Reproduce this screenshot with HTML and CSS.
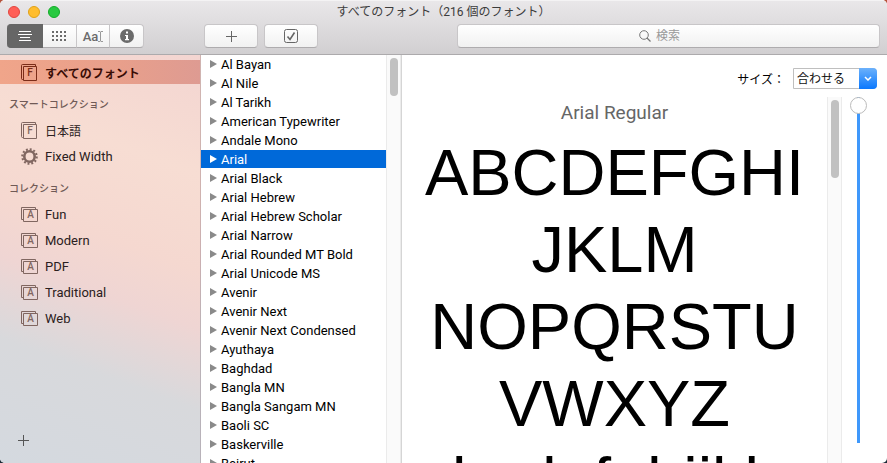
FILE: index.html
```
<!DOCTYPE html>
<html lang="ja">
<head>
  <meta charset="UTF-8" />
  <meta name="viewport" content="width=device-width, initial-scale=1.0"/>
  <title>すべてのフォント</title>
  <link rel="stylesheet" href="styles.css">
</head>
<body>
  <!-- shared icons -->
  <svg class="defs" aria-hidden="true">
    <symbol id="book" viewBox="0 0 17 17">
      <path d="M2.500 15.500H1.500A1 1 0 0 1 .500 14.500V1.500A1 1 0 0 1 1.500 .500H14.500V2M2.500 2.500H15.500V16.500H2.500Z" fill="none" stroke="currentColor"/>
    </symbol>
    <symbol id="stack" viewBox="0 0 17 15">
      <path d="M2.500 12.500H.500V.500H14.500V2.500M2.500 2.500H16.500V14.500H2.500Z" fill="none" stroke="currentColor"/>
    </symbol>
  </svg>

  <div class="window">
    <header class="toolbar">
      <div class="titlebar">
        <div class="lights">
          <button class="light close" aria-label="閉じる"></button>
          <button class="light minimize" aria-label="しまう"></button>
          <button class="light zoom" aria-label="拡大"></button>
        </div>
        <h1>すべてのフォント（216 個のフォント）</h1>
      </div>

      <div class="tools">
        <div class="segments">
          <button class="active" aria-label="サンプル">
            <svg width="14" height="11" viewBox="0 0 14 11"><path d="M1 .5H13M0 3.500H14M2 6.500H12M1 9.500H13" stroke="#fff"/></svg>
          </button>
          <button aria-label="レパートリー">
            <svg width="14" height="11" viewBox="0 0 14 11"><path d="M0 1H14M0 5H14M0 9H14" stroke="#6b6b6b" stroke-width="2" stroke-dasharray="2"/></svg>
          </button>
          <button class="custom" aria-label="カスタム">Aa<svg width="5" height="11" viewBox="0 0 5 11"><path d="M0 .5H2L2.500 1L3 .5H5M2.500 1V10M0 10.500H2L2.500 10L3 10.500H5" fill="none" stroke="#999"/></svg></button>
          <button aria-label="情報">
            <svg width="14" height="14" viewBox="0 0 14 14"><circle cx="7" cy="7" r="7" fill="#6b6b6b"/><path d="M6 2.500H8V4.500H6ZM5 6H8V10H9V11.200H5V10H6V7H5Z" fill="#fff"/></svg>
          </button>
        </div>
        <button class="tool add" aria-label="追加">
          <svg width="11" height="11" viewBox="0 0 11 11"><path d="M5.500 0V11M0 5.500H11" stroke="#666"/></svg>
        </button>
        <button class="tool" aria-label="有効">
          <svg width="14" height="14" viewBox="0 0 14 14" fill="none" stroke="#666"><rect x=".5" y=".5" width="13" height="13" rx="2"/><path d="M3.500 7.500L6 10.500L10.500 3.500" stroke-width="1.600"/></svg>
        </button>
        <label class="search">
          <svg width="12" height="12" viewBox="0 0 12 12" fill="none" stroke="#777"><circle cx="5" cy="5" r="4.300"/><path d="M8 8L11.500 11.500" stroke-width="1.300"/></svg>
          <input type="text" placeholder="検索" aria-label="検索">
        </label>
      </div>
    </header>

    <main class="panes">
      <nav class="sidebar">
        <ul class="library">
          <li><a class="selected" href="#all"><span class="icon"><svg width="17" height="17"><use href="#book"/></svg><b>F</b></span>すべてのフォント</a></li>
        </ul>
        <h2>スマートコレクション</h2>
        <ul>
          <li><a class="kanji" href="#japanese"><span class="icon"><svg width="17" height="17"><use href="#book"/></svg><b>F</b></span>日本語</a></li>
          <li><a href="#fixed"><span class="icon"><svg width="17" height="17" viewBox="0 0 17 17" fill="none" stroke="currentColor"><circle cx="8.500" cy="8.500" r="5.200" stroke-width="2.600"/><circle cx="8.500" cy="8.500" r="7.200" stroke-width="2.200" stroke-dasharray="1.900 1.870"/></svg></span>Fixed Width</a></li>
        </ul>
        <h2>コレクション</h2>
        <ul>
          <li><a href="#fun"><span class="icon flat"><svg width="17" height="15"><use href="#stack"/></svg><b>A</b></span>Fun</a></li>
          <li><a href="#modern"><span class="icon flat"><svg width="17" height="15"><use href="#stack"/></svg><b>A</b></span>Modern</a></li>
          <li><a href="#pdf"><span class="icon flat"><svg width="17" height="15"><use href="#stack"/></svg><b>A</b></span>PDF</a></li>
          <li><a href="#traditional"><span class="icon flat"><svg width="17" height="15"><use href="#stack"/></svg><b>A</b></span>Traditional</a></li>
          <li><a href="#web"><span class="icon flat"><svg width="17" height="15"><use href="#stack"/></svg><b>A</b></span>Web</a></li>
        </ul>
        <button class="new-collection" aria-label="コレクションを追加">
          <svg width="11" height="11" viewBox="0 0 11 11"><path d="M5.500 0V11M0 5.500H11" stroke="#555"/></svg>
        </button>
      </nav>

      <section class="fonts">
        <ul class="font-list">
          <li>Al Bayan</li>
          <li>Al Nile</li>
          <li>Al Tarikh</li>
          <li>American Typewriter</li>
          <li>Andale Mono</li>
          <li class="selected">Arial</li>
          <li>Arial Black</li>
          <li>Arial Hebrew</li>
          <li>Arial Hebrew Scholar</li>
          <li>Arial Narrow</li>
          <li>Arial Rounded MT Bold</li>
          <li>Arial Unicode MS</li>
          <li>Avenir</li>
          <li>Avenir Next</li>
          <li>Avenir Next Condensed</li>
          <li>Ayuthaya</li>
          <li>Baghdad</li>
          <li>Bangla MN</li>
          <li>Bangla Sangam MN</li>
          <li>Baoli SC</li>
          <li>Baskerville</li>
          <li>Beirut</li>
        </ul>
        <div class="scrollbar"><div class="thumb short"></div></div>
      </section>

      <section class="preview">
        <div class="size-row">
          <label for="size">サイズ：</label>
          <div class="combo">
            <select id="size">
              <option>合わせる</option>
            </select>
            <span class="arrow"><svg width="8" height="5" viewBox="0 0 8 5"><path d="M1 1L4 4L7 1" fill="none" stroke="#fff" stroke-width="1.500"/></svg></span>
          </div>
        </div>
        <div class="preview-body">
          <div class="sample">
            <h3>Arial Regular</h3>
            <p>ABCDEFGHI<br>JKLM<br>NOPQRSTU<br>VWXYZ<br>abcdefghijklm</p>
          </div>
          <div class="scrollbar"><div class="thumb"></div></div>
          <div class="slider">
            <input type="range" min="0" max="100" value="100" aria-label="サイズ">
          </div>
        </div>
      </section>
    </main>
  </div>
</body>
</html>
```
FILE: styles.css
```
* {
  box-sizing: border-box;
}

body {
  margin: 0;
  font-family: Roboto, 'Noto Sans CJK JP', sans-serif;
  font-size: 13px;
  color: #000;
  background: linear-gradient(#b5533c, #1c2c38);
}

ul, h1, h2, h3, p {
  margin: 0;
  padding: 0;
  list-style: none;
  font-weight: normal;
}

button, input, select {
  font-family: inherit;
  margin: 0;
}

.defs {
  position: absolute;
  width: 0;
  height: 0;
}

.window {
  display: flex;
  flex-direction: column;
  height: 100vh;
  border-radius: 5px;
  overflow: hidden;
  background: #fff;
}

/* toolbar */
.toolbar {
  flex: none;
  height: 55px;
  background: linear-gradient(#e9e7e9, #d1cfd1);
  border-top: 1px solid #f4f3f4;
  border-bottom: 1px solid #acaaac;
}

.titlebar {
  display: grid;
  grid-template-columns: 1fr auto 1fr;
  align-items: center;
  height: 21px;
  padding: 0 8px;
}

.titlebar h1 {
  font-size: 12px;
  line-height: 20px;
  color: #3c3c3c;
}

.lights {
  display: flex;
  gap: 8px;
}

.light {
  width: 12px;
  height: 12px;
  padding: 0;
  border: 1px solid;
  border-radius: 50%;
}

.close {
  background: #ff5f57;
  border-color: #e2463f;
}

.minimize {
  background: #ffbd2e;
  border-color: #e1a116;
}

.zoom {
  background: #28c940;
  border-color: #12ac28;
}

.tools {
  display: flex;
  padding: 2px 7px 0;
}

.segments {
  display: flex;
  width: 137px;
  height: 24px;
}

.segments button,
.tool,
.search {
  display: flex;
  align-items: center;
  justify-content: center;
  height: 24px;
  padding: 0;
  background: linear-gradient(#fff, #f1f1f1);
  border: 1px solid #c8c6c8;
  border-bottom-color: #aeacae;
  border-radius: 4px;
}

.segments button {
  flex: 1;
  border-radius: 0;
  border-left-width: 0;
}

.segments .active {
  flex: none;
  width: 36px;
  background: #666;
  border-color: #666;
  border-radius: 4px 0 0 4px;
}

.segments button:last-child {
  border-radius: 0 4px 4px 0;
}

.segments .custom {
  color: #6b6b6b;
  font-size: 13px;
  font-weight: 500;
}

.tool {
  width: 54px;
  margin-right: 6px;
}

.add {
  margin-left: 60px;
}

.search {
  flex: 1;
  gap: 5px;
  margin-left: 133px;
}

.search input {
  width: 42px;
  padding: 0;
  border: none;
  outline: none;
  background: none;
  font-size: 12px;
}

.search input::placeholder {
  color: #999;
}

/* panes */
.panes {
  flex: 1;
  display: flex;
  min-height: 0;
}

.sidebar {
  flex: none;
  display: flex;
  flex-direction: column;
  width: 201px;
  padding-top: 5px;
  border-right: 1px solid rgba(120, 90, 100, 0.3);
  background: linear-gradient(200deg, #f3d5d1 0%, #f7ddd3 25%, #f5d8d0 45%, #efd5d3 57%, #d8d9dc 74%, #d4d9df 100%);
}

.sidebar a {
  display: flex;
  align-items: center;
  gap: 7px;
  height: 26px;
  padding-left: 21px;
  color: #2a2020;
  font-size: 13px;
  text-decoration: none;
}

.sidebar .kanji {
  font-size: 12px;
}

.sidebar a.selected {
  height: 24px;
  margin-bottom: 1px;
  color: #3a0d06;
  font-size: 12px;
  font-weight: bold;
  background: linear-gradient(90deg, #f0a58a, #e89f8b 60%, #de9b92);
}

.sidebar h2 {
  margin-top: 7px;
  padding-left: 9px;
  font-size: 10px;
  line-height: 25px;
  color: #705a56;
  font-weight: 500;
}

.icon {
  display: grid;
  width: 17px;
  height: 17px;
  color: #806660;
}

.selected .icon {
  color: #7a2c18;
}

.icon svg,
.icon b {
  grid-area: 1 / 1;
}

.icon b {
  align-self: center;
  padding: 2px 0 0 1px;
  font-size: 10px;
  font-weight: 500;
  line-height: 10px;
  text-align: center;
}

.flat {
  height: 15px;
}

.flat b {
  padding-left: 2px;
}

.new-collection {
  display: flex;
  margin: auto 0 17px 18px;
  padding: 0;
  border: none;
  background: none;
  align-self: flex-start;
}

/* font list */
.fonts {
  flex: none;
  display: flex;
  width: 201px;
  border-right: 1px solid #d5d5d5;
}

.font-list {
  flex: 1;
  overflow: hidden;
}

.font-list li {
  display: flex;
  align-items: center;
  gap: 4px;
  height: 18px;
  margin-bottom: 1px;
  padding-left: 9px;
  white-space: nowrap;
}

.font-list li::before {
  content: '';
  border: 4px solid transparent;
  border-left: 7px solid #8a8a8a;
  border-right: none;
}

.font-list .selected {
  color: #fff;
  background: #0069d9;
}

.font-list .selected::before {
  border-left-color: #fff;
}

.scrollbar {
  flex: none;
  width: 15px;
  padding: 3px;
  background: #fafafa;
  border-left: 1px solid #ebebeb;
  border-right: 1px solid #ebebeb;
}

.thumb {
  width: 8px;
  height: 78px;
  border-radius: 4px;
  background: #c1c1c1;
}

.thumb.short {
  height: 38px;
}

/* preview */
.preview {
  flex: 1;
  display: flex;
  flex-direction: column;
  min-width: 0;
}

.size-row {
  display: flex;
  flex: none;
  justify-content: flex-end;
  align-items: center;
  gap: 8px;
  height: 42px;
  padding: 5px 10px 0 0;
  font-size: 12px;
}

.combo {
  display: flex;
  position: relative;
}

.combo select {
  width: 84px;
  height: 21px;
  padding: 0 20px 0 3px;
  appearance: none;
  border: 1px solid #bfbfbf;
  border-radius: 0 4px 4px 0;
  background: #fff;
  color: #111;
  font-size: 12px;
}

.arrow {
  position: absolute;
  top: 0;
  right: 0;
  bottom: 0;
  display: flex;
  align-items: center;
  justify-content: center;
  width: 18px;
  border-radius: 0 4px 4px 0;
  background: linear-gradient(#6cb1fb, #0a78fe);
  pointer-events: none;
}

.preview-body {
  flex: 1;
  display: flex;
  min-height: 0;
}

.sample {
  flex: 1;
  min-width: 0;
  overflow: hidden;
  text-align: center;
}

.sample h3 {
  padding-top: 4px;
  font-size: 19px;
  line-height: 24px;
  color: #666;
}

.sample p {
  padding-top: 9px;
  font-family: Arial, 'Liberation Sans', sans-serif;
  font-size: 65px;
  line-height: 77px;
  color: #000;
}

.slider {
  flex: none;
  display: flex;
  justify-content: center;
  width: 45px;
  padding: 0 12px 20px 0;
}

.slider input {
  width: 17px;
  height: 100%;
  appearance: none;
  writing-mode: vertical-lr;
  direction: rtl;
  background: none;
}

.slider input::-webkit-slider-runnable-track {
  width: 3px;
  background: #3f98fb;
}

.slider input::-webkit-slider-thumb {
  appearance: none;
  width: 17px;
  height: 17px;
  margin-left: -7px;
  border: 1px solid #bbb;
  border-radius: 50%;
  background: #fff;
}
```
